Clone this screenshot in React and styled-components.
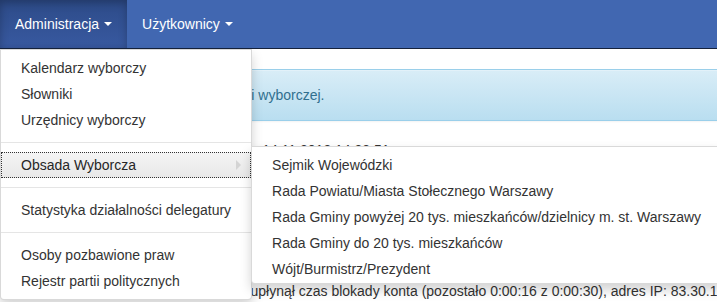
import React from 'react'
import styled, { createGlobalStyle, css } from 'styled-components'

const GlobalStyle = createGlobalStyle`
  html, body {
    margin: 0;
    padding: 0;
    background: #fff;
    overflow: hidden;
  }
  body {
    font-family: "Liberation Sans", Arial, sans-serif;
    font-size: 14px;
    line-height: 20px;
    color: #333;
  }
  ul { margin: 0; padding: 0; list-style: none; }
`

const Page = styled.div`
  position: relative;
  width: 717px;
  height: 302px;
  overflow: hidden;
`

const Navbar = styled.nav`
  display: flex;
  height: 48px;
  background: #4167b1;
  border-bottom: 1px solid #15223c;
`

const NavItem = styled.div`
  position: relative;
`

const NavLink = styled.a`
  display: flex;
  align-items: center;
  height: 48px;
  padding: 0 15px;
  color: #fff;
  text-decoration: none;
  cursor: pointer;

  ${p => p.$open && css`
    background: linear-gradient(to bottom, #2d4b88 0, #3859a0 100%);
    box-shadow: inset 0 3px 9px rgba(0, 0, 0, 0.25);
  `}
`

const Caret = styled.span`
  display: inline-block;
  width: 0;
  height: 0;
  margin-left: 5px;
  border-top: 4px solid #fff;
  border-left: 4px solid transparent;
  border-right: 4px solid transparent;
`

const Menu = styled.ul`
  position: absolute;
  z-index: 10;
  min-width: 160px;
  padding: 5px 0;
  background: #fff;
  border: 1px solid rgba(0, 0, 0, 0.15);
  box-shadow: 0 6px 12px rgba(0, 0, 0, 0.175);
  white-space: nowrap;

  ${p => p.$sub ? css`
    top: -6px;
    left: 100%;
    padding-bottom: 1px;
    border-radius: 0 4px 4px 4px;
  ` : css`
    top: calc(100% + 1px);
    left: 0;
    border-radius: 0 0 4px 4px;
  `}
`

const MenuEntry = styled.li`
  position: relative;
`

const MenuLink = styled.a`
  display: block;
  padding: 3px 20px;
  line-height: 20px;
  color: #333;
  text-decoration: none;
  cursor: pointer;

  ${p => p.$active && css`
    background: linear-gradient(to bottom, #f5f5f5 0, #e8e8e8 100%);
    color: #262626;
    outline: 1px dotted #333;
    outline-offset: -1px;
  `}

  ${p => p.$arrow && css`
    &::after {
      content: '';
      float: right;
      width: 0;
      height: 0;
      margin-top: 5px;
      margin-right: -10px;
      border-style: solid;
      border-color: transparent;
      border-width: 5px 0 5px 5px;
      border-left-color: #d4d4d4;
    }
  `}
`

const Divider = styled.li`
  height: 1px;
  margin: 9px 0;
  background: #e5e5e5;
`

const Content = styled.main`
  width: 820px;
  padding: 20px 15px 0;
`

const Alert = styled.div`
  margin-bottom: 19px;
  padding: 15px 15px 15px 16px;
  border: 1px solid #9acfea;
  border-radius: 4px;
  background: linear-gradient(to bottom, #d9edf7 0, #b9def0 100%);
  box-shadow: inset 0 1px 0 rgba(255, 255, 255, 0.25), 0 1px 2px rgba(0, 0, 0, 0.05);
  color: #31708f;
  white-space: nowrap;
`

const Info = styled.div`
  padding: 0 2px;
`

const InfoLine = styled.p`
  margin: ${p => p.$gap || 0}px 0 0;
  white-space: nowrap;
`

const adminItems = [
  ['Kalendarz wyborczy', 'Słowniki', 'Urzędnicy wyborczy'],
  ['Obsada Wyborcza'],
  ['Statystyka działalności delegatury'],
  ['Osoby pozbawione praw', 'Rejestr partii politycznych'],
]

const obsadaItems = [
  'Sejmik Wojewódzki',
  'Rada Powiatu/Miasta Stołecznego Warszawy',
  'Rada Gminy powyżej 20 tys. mieszkańców/dzielnicy m. st. Warszawy',
  'Rada Gminy do 20 tys. mieszkańców',
  'Wójt/Burmistrz/Prezydent',
]

function SubMenu() {
  return (
    <Menu $sub>
      {obsadaItems.map(item => (
        <MenuEntry key={item}>
          <MenuLink>{item}</MenuLink>
        </MenuEntry>
      ))}
    </Menu>
  )
}

function AdminMenu() {
  return (
    <Menu>
      {adminItems.map((group, i) => (
        <React.Fragment key={i}>
          {i > 0 && <Divider />}
          {group.map(item =>
            item === 'Obsada Wyborcza' ? (
              <MenuEntry key={item}>
                <MenuLink $active $arrow>{item}</MenuLink>
                <SubMenu />
              </MenuEntry>
            ) : (
              <MenuEntry key={item}>
                <MenuLink>{item}</MenuLink>
              </MenuEntry>
            )
          )}
        </React.Fragment>
      ))}
    </Menu>
  )
}

export default function App() {
  return (
    <Page>
      <GlobalStyle />
      <Navbar>
        <NavItem>
          <NavLink $open>Administracja <Caret /></NavLink>
          <AdminMenu />
        </NavItem>
        <NavItem>
          <NavLink>Użytkownicy <Caret /></NavLink>
        </NavItem>
      </Navbar>
      <Content>
        <Alert>Wybierz z menu moduł obsługi akcji wyborczej.</Alert>
        <Info>
          <InfoLine>Ostatnie udane logowanie do systemu: 14.11.2018 14:33:51</InfoLine>
          <InfoLine $gap={121}>
            Konto tymczasowo zablokowane, nie upłynął czas blokady konta (pozostało 0:00:16 z 0:00:30), adres IP: 83.30.152.14
          </InfoLine>
        </Info>
      </Content>
    </Page>
  )
}
